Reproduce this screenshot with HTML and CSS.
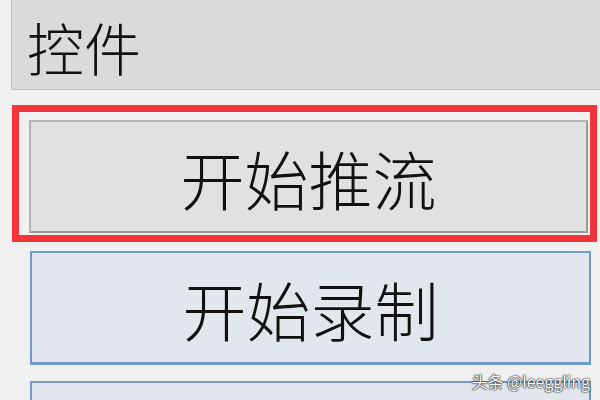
FILE: index.html
```html
<!DOCTYPE html>
<html lang="zh-CN">
<head>
    <meta charset="UTF-8">
    <meta name="viewport" content="width=device-width, initial-scale=1.0">
    <title>控件</title>
    <link rel="stylesheet" href="styles.css">
</head>
<body>
    <div class="panel">
        <div class="panel-title">控件</div>

        <div class="secili">
            <button class="btn btn-gri">开始推流</button>
        </div>

        <div class="buton-listesi">
            <button class="btn btn-mavi">开始录制</button>
            <button class="btn btn-mavi"></button>
        </div>
    </div>

    <div class="filigran">头条 @leeggling</div>
</body>
</html>
```

FILE: styles.css
```css
body {
    background-color: #f0f0f0;
    color: #111;
    font-family: "Noto Sans CJK SC", "Noto Sans", sans-serif;
    font-weight: 300;
    margin: 0;
    width: 600px;
    height: 400px;
    overflow: hidden;
    position: relative;
}

.panel {
    padding-left: 11px;
    height: 400px;
    overflow: hidden;
}

.panel-title {
    height: 89px;
    background-color: #dadada;
    border-left: 1px solid #bdbdbd;
    border-bottom: 1px solid #bdbdbd;
    font-size: 57px;
    line-height: 92px;
    padding-left: 15px;
    margin-right: -20px;
}

.secili {
    margin: 15px 3px 0 1px;
    border: 7px solid #f2353b;
    padding: 8px 2px 2px 10px;
}

.btn {
    display: block;
    width: 100%;
    height: 113px;
    font-family: inherit;
    font-weight: inherit;
    font-size: 64px;
    color: #111;
    padding: 0;
    margin: 0;
    cursor: pointer;
    line-height: 1;
    flex-shrink: 0;
}

.btn-gri {
    background-color: #e1e1e1;
    border: 2px solid #b4b4b4;
    border-right-color: #999;
    border-bottom-color: #999;
}

.buton-listesi {
    margin: 9px 9px 0 19px;
    display: flex;
    flex-direction: column;
    gap: 16px;
}

.btn-mavi {
    background-color: #e2e7ee;
    border: 2px solid #6f9bcc;
    border-bottom-width: 3px;
    height: 114px;
}

.filigran {
    position: absolute;
    right: 10px;
    top: 369px;
    font-size: 16px;
    font-weight: 400;
    color: #fff;
    text-shadow: 0 0 1px #222, 0 0 2px #222, 0 0 1px #222;
}
```
